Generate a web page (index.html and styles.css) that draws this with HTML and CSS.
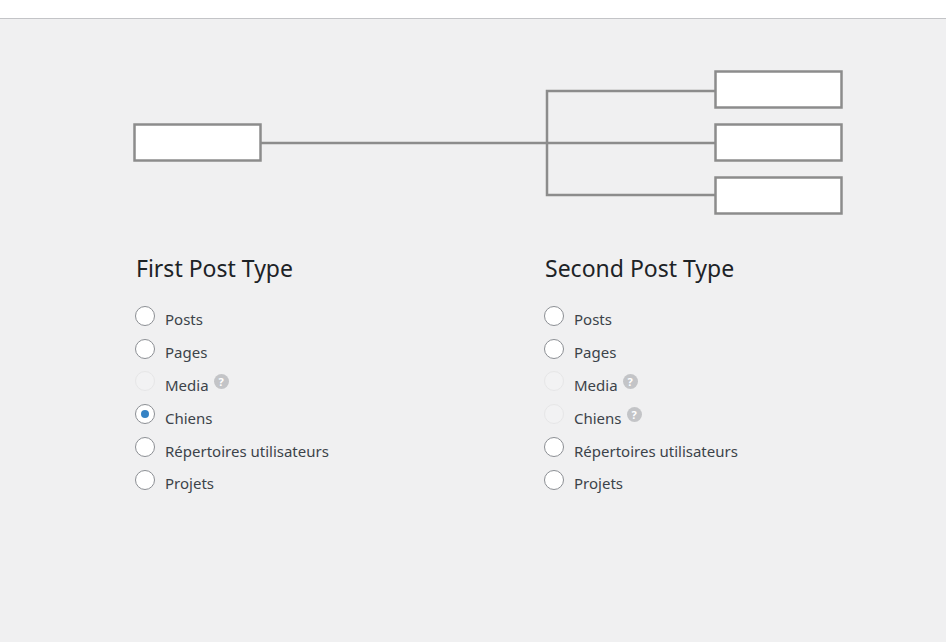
FILE: index.html
```html
<!DOCTYPE html>
<html>
<head>
<meta charset="utf-8">
<link rel="stylesheet" href="styles.css">
</head>
<body>
<div class="topbar"></div>
<main class="content">
  <div class="diagram">
    <svg width="946" height="180" viewBox="0 0 946 180">
      <g fill="none" stroke="#8c8c8c" stroke-width="2.5">
        <line x1="261" y1="82" x2="547" y2="82"/>
        <polyline points="715,30 547,30 547,134 715,134"/>
        <line x1="547" y1="82" x2="715" y2="82"/>
      </g>
      <g fill="#fff" stroke="#8c8c8c" stroke-width="2.5">
        <rect x="134.5" y="63.5" width="126" height="36"/>
        <rect x="715.5" y="10.5" width="126" height="36"/>
        <rect x="715.5" y="63.5" width="126" height="36"/>
        <rect x="715.5" y="116.5" width="126" height="36"/>
      </g>
    </svg>
  </div>
  <div class="columns">
    <section class="col">
      <h2>First Post Type</h2>
      <ul class="options">
        <li><span class="radio"></span><span class="label">Posts</span></li>
        <li><span class="radio"></span><span class="label">Pages</span></li>
        <li><span class="radio disabled"></span><span class="label">Media</span><span class="help">?</span></li>
        <li><span class="radio checked"></span><span class="label">Chiens</span></li>
        <li><span class="radio"></span><span class="label">Répertoires utilisateurs</span></li>
        <li><span class="radio"></span><span class="label">Projets</span></li>
      </ul>
    </section>
    <section class="col">
      <h2>Second Post Type</h2>
      <ul class="options">
        <li><span class="radio"></span><span class="label">Posts</span></li>
        <li><span class="radio"></span><span class="label">Pages</span></li>
        <li><span class="radio disabled"></span><span class="label">Media</span><span class="help">?</span></li>
        <li><span class="radio disabled"></span><span class="label">Chiens</span><span class="help">?</span></li>
        <li><span class="radio"></span><span class="label">Répertoires utilisateurs</span></li>
        <li><span class="radio"></span><span class="label">Projets</span></li>
      </ul>
    </section>
  </div>
</main>
</body>
</html>
```
FILE: styles.css
```css
html, body {
  margin: 0;
  padding: 0;
}
body {
  background: #f0f0f1;
  font-family: "Noto Sans", "Open Sans", sans-serif;
  color: #3c434a;
  width: 946px;
  height: 642px;
  overflow: hidden;
}
.topbar {
  height: 18px;
  background: #fff;
  border-bottom: 1px solid #c3c4c7;
}
.diagram {
  margin-top: 42px;
  height: 180px;
}
.diagram svg {
  display: block;
}
.columns {
  display: flex;
  padding-left: 135px;
  margin-top: 11px;
}
.col {
  width: 409px;
  flex: none;
}
h2 {
  margin: 0 0 0 1px;
  font-size: 23px;
  font-weight: 400;
  color: #1d2327;
  line-height: 32px;
}
.options {
  list-style: none;
  margin: 19px 0 0;
  padding: 0;
}
.options li {
  display: flex;
  align-items: center;
  height: 32.8px;
}
.radio {
  width: 18px;
  height: 18px;
  border: 1px solid #8c8f94;
  border-radius: 50%;
  background: #fff;
  box-sizing: content-box;
  margin-right: 10px;
  margin-top: -7px;
  position: relative;
  flex: none;
}
.radio.disabled {
  border-color: #e6e6e7;
  background: #f2f2f3;
}
.radio.checked::after {
  content: "";
  position: absolute;
  left: 5px;
  top: 5px;
  width: 8px;
  height: 8px;
  border-radius: 50%;
  background: #3582c4;
}
.label {
  font-size: 15px;
  line-height: 20px;
}
.help {
  display: inline-flex;
  align-items: center;
  justify-content: center;
  width: 15px;
  height: 15px;
  border-radius: 50%;
  background: #c3c4c7;
  color: #fff;
  font-size: 11px;
  font-weight: 700;
  margin-left: 5px;
  margin-top: -6px;
  line-height: 1;
}
```
